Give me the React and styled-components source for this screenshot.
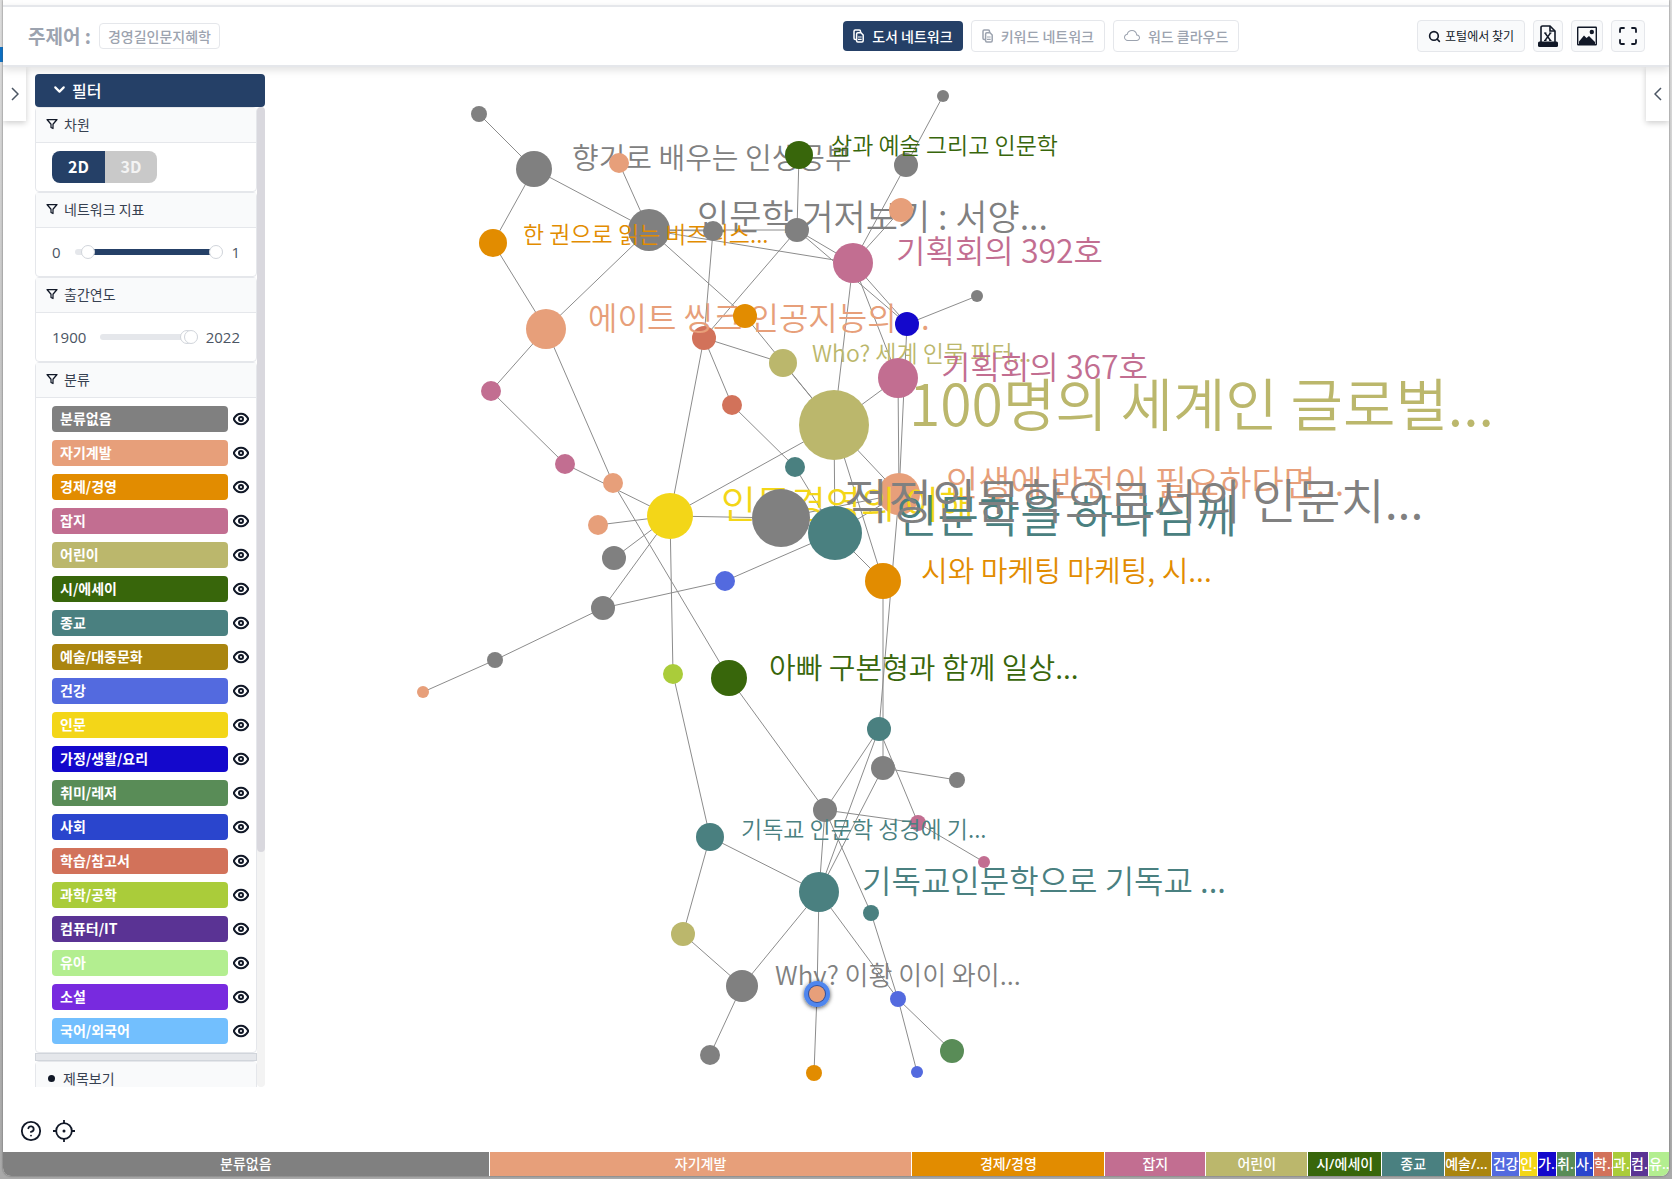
import React, { useState } from "react";
import styled, { createGlobalStyle } from "styled-components";
import { FiFilter, FiChevronDown, FiEye, FiSearch, FiHelpCircle } from "react-icons/fi";
import { BsCloud } from "react-icons/bs";

const navy = "#254067";
const line = "#e5e7eb";
const ink = "#111827";
const muted = "#9ca3af";

const GlobalStyle = createGlobalStyle`
  * { box-sizing: border-box; }
  body {
    margin: 0;
    background:
      linear-gradient(#0b6fc4, #0b6fc4) 0 47px / 3px 15px no-repeat,
      linear-gradient(#dcdcdc, #c6c6c6 30%, #a9a9a9);
    color: ${ink};
    font-family: "Noto Sans CJK KR", "Noto Sans", sans-serif;
    font-size: 14px;
    line-height: 20px;
  }
  button, input { font: inherit; margin: 0; }
`;

const Window = styled.div`
  display: flex;
  flex-direction: column;
  height: calc(100vh - 3px);
  margin: 0 3px 3px;
  overflow: hidden;
  background: #fff;
  border-radius: 0 0 8px 8px;
  box-shadow: 0 0 2px #555;
`;

const Header = styled.header`
  position: relative;
  z-index: 2;
  display: flex;
  align-items: center;
  justify-content: space-between;
  flex: none;
  height: 62px;
  margin-top: 5px;
  padding: 0 24px 0 25px;
  background: #fff;
  border-top: 2px solid ${line};
  border-bottom: 2px solid ${line};
  box-shadow: 0 3px 8px rgba(0, 0, 0, 0.12);
`;

const HeaderSide = styled.div`
  display: flex;
  flex: ${(p) => (p.$end ? "1 1 0" : "2 1 0")};
  align-items: center;
  justify-content: ${(p) => (p.$end ? "flex-end" : "flex-start")};
  gap: 8px;
`;

const Title = styled.h1`
  margin: 0;
  color: ${muted};
  font-size: 19px;
  line-height: 26px;
  font-weight: 700;
`;

const Keyword = styled.span`
  padding: 2px 8px;
  border: 1px solid ${line};
  border-radius: 4px;
  color: ${muted};
  font-weight: 500;
`;

const Tabs = styled.nav`
  display: flex;
  align-items: center;
  gap: 8px;
  padding-left: 4px;
`;

const Tab = styled.button`
  display: flex;
  align-items: center;
  gap: 8px;
  height: ${(p) => (p.$active ? 30 : 32)}px;
  padding: 0 10px;
  border: ${(p) => (p.$active ? "0" : `1px solid ${line}`)};
  border-radius: 4px;
  background: ${(p) => (p.$active ? navy : "#fff")};
  color: ${(p) => (p.$active ? "#fff" : muted)};
  font-weight: 500;
  white-space: nowrap;
`;

const ToolButton = styled.button`
  display: flex;
  align-items: center;
  justify-content: center;
  gap: 4px;
  height: 32px;
  padding: 0 ${(p) => (p.$text ? 10 : 4)}px;
  border: 1px solid ${line};
  border-radius: 4px;
  background: #f9fafb;
  color: ${ink};
  font-size: 12px;
  white-space: nowrap;
`;

const Stage = styled.main`
  position: relative;
  display: flex;
  flex: 1;
  align-items: flex-start;
  justify-content: space-between;
  min-height: 0;
`;

const Network = styled.svg`
  position: absolute;
  inset: 0;
  width: 100%;
  height: 100%;
`;

const NodeLabel = styled.text`
  font-family: "Noto Sans CJK KR", sans-serif;
  font-weight: 350;
`;

const Drawer = styled.button`
  position: relative;
  display: flex;
  align-items: center;
  justify-content: center;
  flex: none;
  width: 23px;
  height: 54px;
  padding: 0;
  border: 0;
  background: #fff;
  color: #4b5563;
  box-shadow: 0 2px 6px rgba(0, 0, 0, 0.2);
`;

const Left = styled.div`
  position: relative;
  display: flex;
  align-items: flex-start;
  gap: 9px;
  height: 100%;
`;

const LeftColumn = styled.div`
  display: flex;
  flex-direction: column;
  width: 230px;
  height: 100%;
  padding-top: 7px;
`;

const FilterToggle = styled.button`
  display: flex;
  align-items: center;
  flex: none;
  gap: 4px;
  height: 33px;
  padding: 0 16px 2px;
  border: 0;
  border-radius: 4px;
  background: ${navy};
  color: #fff;
  font-size: 16px;
  font-weight: 500;
`;

const FilterBody = styled.div`
  display: flex;
  flex: 1;
  min-height: 0;
`;

const Sections = styled.div`
  flex: 1;
  overflow: hidden;
`;

const ScrollTrack = styled.div`
  width: 8px;
  border-radius: 4px;
  background: #f3f3f3;
`;

const ScrollThumb = styled.div`
  height: 76%;
  border-radius: 4px;
  background: #d9d8de;
`;

const Section = styled.section`
  border: 1px solid ${line};
  border-radius: 4px;
`;

const SectionHead = styled.h2`
  display: flex;
  align-items: center;
  gap: 6px;
  height: 35px;
  margin: 0;
  padding: 0 10px 2px;
  border-bottom: 1px solid ${line};
  background: #f9fafb;
  color: #374151;
  font-size: 14px;
  font-weight: 400;
`;

const FunnelIcon = styled(FiFilter)`
  color: ${ink};
`;

const Bullet = styled.span`
  width: 7px;
  height: 7px;
  margin: 0 2px;
  border-radius: 50%;
  background: ${ink};
`;

const SectionBody = styled.div`
  display: flex;
  align-items: center;
  height: 48px;
  padding: 0 16px;
`;

const DimButton = styled.button`
  width: ${(p) => (p.$active ? 53 : 52)}px;
  height: 32px;
  padding: 0 0 2px;
  border: 0;
  border-radius: ${(p) => (p.$active ? "8px 0 0 8px" : "0 8px 8px 0")};
  background: ${(p) => (p.$active ? navy : "#c9c9c9")};
  color: ${(p) => (p.$active ? "#fff" : "#f3f3f3")};
  font-size: 16px;
  font-weight: 700;
`;

const Bound = styled.span`
  color: #4b5563;
  font-family: "Open Sans", sans-serif;
  font-size: 15px;
`;

const RangeBox = styled.div`
  position: relative;
  display: flex;
  align-items: center;
  flex: 1;
  height: 16px;
  margin: 0 8px 0 14px;
`;

const RangeTrack = styled.div`
  width: 100%;
  height: 6px;
  padding: 0 7px;
  border-radius: 3px;
  background: ${line};
`;

const RangeFill = styled.div`
  height: 6px;
  background: ${navy};
`;

const RangeInput = styled.input`
  position: absolute;
  inset: 0;
  width: 100%;
  height: 16px;
  appearance: none;
  background: transparent;
  pointer-events: none;
  &::-webkit-slider-thumb {
    appearance: none;
    width: 14px;
    height: 14px;
    border: 1px solid #d1d5db;
    border-radius: 50%;
    background: #fff;
    pointer-events: auto;
  }
`;

const Categories = styled.ul`
  display: flex;
  flex-direction: column;
  gap: 8px;
  margin: 0;
  padding: 8px 5px 8px 16px;
  list-style: none;
`;

const Category = styled.li`
  display: flex;
  gap: 3px;
`;

const CategoryName = styled.span`
  flex: 1;
  height: 26px;
  padding: 2px 8px;
  border-radius: 4px;
  background: ${(p) => p.$color};
  color: #fff;
  font-weight: 700;
`;

const EyeButton = styled.button`
  display: flex;
  align-items: center;
  justify-content: center;
  width: 20px;
  height: 26px;
  padding: 0;
  border: 0;
  background: none;
  color: ${ink};
`;

const Divider = styled.div`
  height: 8px;
  border: 1px solid #d1d5db;
  background: ${line};
`;

const CornerTools = styled.div`
  display: flex;
  flex: none;
  align-items: center;
  gap: 11px;
  height: 65px;
  padding-top: 22px;
  margin-left: -15px;
`;

const IconButton = styled.button`
  display: flex;
  padding: 0;
  border: 0;
  background: none;
  color: ${ink};
`;

const ShareBar = styled.footer`
  display: flex;
  flex: none;
  gap: 1px;
  height: 24px;
`;

const Share = styled.div`
  flex: ${(p) => p.$weight} 1 0;
  min-width: 0;
  overflow: hidden;
  background: ${(p) => p.$color};
  color: #fff;
  font-family: "Noto Sans", "Noto Sans CJK KR", sans-serif;
  font-weight: 500;
  line-height: 24px;
  text-align: center;
  text-overflow: ellipsis;
  white-space: nowrap;
`;

const C = {
  none: "#808080",
  self: "#e79f7a",
  biz: "#e28c00",
  mag: "#c26e91",
  kid: "#bbb76c",
  essay: "#38660b",
  rel: "#4a8080",
  art: "#aa850f",
  health: "#536adf",
  hum: "#f3d618",
  home: "#1408cc",
  hobby: "#598c57",
  soc: "#2a45cd",
  study: "#d2725a",
  sci: "#aacc3a",
  it: "#5a3394",
  baby: "#b3ee90",
  novel: "#782adf",
  lang: "#72bffe",
};

const categories = [
  ["none", "분류없음", 486],
  ["self", "자기계발", 422],
  ["biz", "경제/경영", 192],
  ["mag", "잡지", 100],
  ["kid", "어린이", 101],
  ["essay", "시/에세이", 73],
  ["rel", "종교", 62],
  ["art", "예술/대중문화", 46],
  ["health", "건강", 27],
  ["hum", "인문", 17],
  ["home", "가정/생활/요리", 18],
  ["hobby", "취미/레저", 18],
  ["soc", "사회", 17],
  ["study", "학습/참고서", 18],
  ["sci", "과학/공학", 17],
  ["it", "컴퓨터/IT", 17],
  ["baby", "유아", 20],
  ["novel", "소설", 0],
  ["lang", "국어/외국어", 0],
];

// id: [x, y, radius, category, label, label x, label baseline, label size]
const nodes = {
  a1: [479, 114, 8, "none"],
  a2: [534, 169, 18, "none", "향기로 배우는 인생공부", 572, 169, 29],
  a4: [649, 230, 21, "none", "인문학 거저보기 : 서양...", 697, 230, 35],
  a3: [619, 163, 10, "self"],
  a5: [493, 243, 14, "biz", "한 권으로 읽는 비즈니스...", 523, 243, 23],
  a6: [713, 231, 10, "none"],
  b6: [797, 230, 12, "none"],
  b1: [943, 96, 6, "none"],
  b3: [906, 165, 12, "none"],
  b2: [799, 155, 14, "essay", "삶과 예술 그리고 인문학", 831, 154, 23],
  b4: [901, 210, 12, "self"],
  b5: [853, 263, 20, "mag", "기획회의 392호", 896, 263, 32],
  a9: [704, 338, 12, "study"],
  a7: [546, 329, 20, "self", "에이트 씽크 인공지능의 ...", 588, 330, 32],
  a8: [745, 316, 12, "biz"],
  b7: [907, 324, 12, "home"],
  b8: [977, 296, 6, "none"],
  c1: [783, 363, 14, "kid", "Who? 세계 인물 피터...", 812, 362, 23],
  b9: [898, 378, 20, "mag", "기획회의 367호", 941, 379, 32],
  c2: [491, 391, 10, "mag"],
  c3: [732, 405, 10, "study"],
  c4: [565, 464, 10, "mag"],
  c5: [795, 467, 10, "rel"],
  c6: [834, 425, 35, "kid", "100명의 세계인 글로벌...", 909, 426, 57],
  d1: [899, 494, 21, "self", "인생에 반전이 필요하다면...", 946, 496, 35],
  d2: [670, 516, 23, "hum", "인문경영의 이해", 721, 518, 38],
  d3: [613, 483, 10, "self"],
  d4: [598, 525, 10, "self"],
  d5: [614, 558, 12, "none"],
  d6: [603, 608, 12, "none"],
  d7: [495, 660, 8, "none"],
  d8: [423, 692, 6, "self"],
  d9: [725, 581, 10, "health"],
  e1: [673, 674, 10, "sci"],
  e2: [729, 678, 18, "essay", "아빠 구본형과 함께 일상...", 769, 679, 29],
  e4: [835, 533, 27, "rel", "인문학을 하나님께", 896, 533, 45],
  e3: [781, 518, 29, "none", "적정인문학으로서의 인문치...", 844, 519, 48],
  e5: [883, 581, 18, "biz", "시와 마케팅 마케팅, 시...", 921, 582, 29],
  f1: [879, 729, 12, "rel"],
  f2: [883, 768, 12, "none"],
  f3: [957, 780, 8, "none"],
  f4: [825, 810, 12, "none"],
  f5: [918, 823, 8, "mag"],
  f6: [984, 862, 6, "mag"],
  f7: [710, 837, 14, "rel", "기독교 인문학 성경에 기...", 741, 838, 23],
  f8: [819, 892, 20, "rel", "기독교인문학으로 기독교 ...", 862, 893, 32],
  f9: [871, 913, 8, "rel"],
  g1: [683, 934, 12, "kid"],
  g2: [742, 986, 16, "none", "Why? 이황 이이 와이...", 775, 985, 26],
  g3: [817, 994, 8, "self"],
  g4: [898, 999, 8, "health"],
  g5: [952, 1051, 12, "hobby"],
  g6: [710, 1055, 10, "none"],
  g7: [814, 1073, 8, "biz"],
  g8: [917, 1072, 6, "health"],
};

const selectedNode = "g3";

const edges = `a1-a2 a2-a5 a2-a4 a3-a4 a4-a7 a5-a7 a7-c2 c2-c4 c4-d2 a7-d3 d3-e2 a4-a6 a4-b6 a4-b5 a4-a8
a6-a9 b6-a9 a9-c1 a9-c3 a9-d2 a8-c6 c1-c6 c3-c5 c5-e4 b2-b6 b6-b5 b6-b7 b1-b3 b3-b5 b4-b5 b5-c6 b5-b7
b5-b9 b7-b8 b7-d1 b9-d1 b9-c6 c6-d2 c6-e4 c6-d1 c6-e5 d2-e3 e3-e4 e3-d1 d2-d4 d2-d5 d2-d6 d6-d7 d7-d8
d6-d9 d9-e4 d2-e1 e1-f7 e2-f4 e4-e5 d1-e4 d1-f1 e5-f2 f1-f4 f1-f8 f1-f5 f2-f3 f2-f8 f4-f8 f4-f5 f5-f6
f4-f9 f9-g4 f8-f7 f7-g1 g1-g2 f8-g2 g2-g6 f8-g3 g3-g7 f8-g4 g4-g5 g4-g8`
  .split(/\s+/)
  .map((pair) => pair.split("-"));

function NetworkChart() {
  return (
    <Network viewBox="3 67 1666 1085" role="img" aria-label="도서 네트워크">
      <defs>
        <filter id="halo" x="-50%" y="-50%" width="200%" height="200%">
          <feDropShadow dx="0" dy="1" stdDeviation="2" floodColor="#000" floodOpacity="0.7" />
        </filter>
      </defs>
      <g stroke="#8c8c8c" strokeWidth="1">
        {edges.map(([from, to]) => (
          <line
            key={from + to}
            x1={nodes[from][0]}
            y1={nodes[from][1]}
            x2={nodes[to][0]}
            y2={nodes[to][1]}
          />
        ))}
      </g>
      {Object.entries(nodes).map(([id, [x, y, r, kind, label, lx, ly, size]]) => (
        <g key={id} fill={C[kind]}>
          {id === selectedNode && <circle cx={x} cy={y} r="13" fill="#4f86ee" filter="url(#halo)" />}
          {id === selectedNode && <circle cx={x} cy={y} r="9" fill="#35509a" />}
          <circle cx={x} cy={y} r={r} />
          {label && (
            <NodeLabel x={lx} y={ly} fontSize={size}>
              {label}
            </NodeLabel>
          )}
        </g>
      ))}
    </Network>
  );
}

const PagesIcon = () => (
  <svg width="11" height="14" viewBox="1 0 11 14" fill="none" stroke="currentColor" strokeWidth="1.5">
    <path d="M4 10.4H3.2A1.2 1.2 0 0 1 2 9.200V2.200A1.200 1.200 0 0 1 3.200 1H7.300A1.200 1.200 0 0 1 8.500 2.200V3.500" />
    <path d="M5.800 3.800H9L11.200 6V11.800A1.200 1.200 0 0 1 10 13H5.800A1.200 1.200 0 0 1 4.600 11.800V5A1.200 1.200 0 0 1 5.800 3.800Z" />
    <path d="M6 8H9.700M6 10.300H9.700" strokeWidth="1.200" />
  </svg>
);

const ExcelIcon = () => (
  <svg width="20" height="22" viewBox="0 0 20 22" fill="none" stroke="currentColor" strokeWidth="1.600">
    <path d="M3 17V2.500A1.500 1.500 0 0 1 4.500 1H12L17 6V17" />
    <path d="M12 1V6H17" />
    <path d="M7 8L12.500 15.500M12.500 8L7 15.500" strokeWidth="1.400" />
    <path d="M6 8H8.500M11.200 8H13.500M6 15.500H8.500M11.200 15.500H13.500" strokeWidth="1" />
    <rect x="0" y="16.500" width="20" height="5.500" rx="1.500" fill="currentColor" stroke="none" />
  </svg>
);

const PictureIcon = () => (
  <svg width="22" height="20" viewBox="-1 0 22 20">
    <rect x="0.700" y="1.200" width="18.600" height="17.600" rx="0.500" fill="none" stroke="currentColor" strokeWidth="1.400" />
    <path d="M2 15.500L7 9.500L9.500 12L12 10L18 16V18H2Z" fill="currentColor" />
    <circle cx="14.800" cy="6" r="2.200" fill="currentColor" />
  </svg>
);

const ExpandIcon = () => (
  <svg width="24" height="20" viewBox="-2 0 24 20" fill="none" stroke="currentColor" strokeWidth="1.800" strokeLinecap="round">
    <path d="M2 6V3.500A1.500 1.500 0 0 1 3.500 2H6M14 2H16.500A1.500 1.500 0 0 1 18 3.500V6M18 14V16.500A1.500 1.500 0 0 1 16.500 18H14M6 18H3.500A1.500 1.500 0 0 1 2 16.500V14" />
  </svg>
);

const LocateIcon = () => (
  <svg width="22" height="22" viewBox="0 0 22 22" fill="none" stroke="currentColor" strokeWidth="1.800">
    <circle cx="11" cy="11" r="7.800" />
    <path d="M11 0V4M11 18V22M0 11H4M18 11H22" />
    <circle cx="11" cy="11" r="1.500" fill="currentColor" stroke="none" />
  </svg>
);

const Arrow = ({ left }) => (
  <svg width="8" height="14" viewBox="0 0 8 14" fill="none" stroke="currentColor" strokeWidth="1.500">
    <path d={left ? "M7 1L1 7L7 13" : "M1 1L7 7L1 13"} />
  </svg>
);

function DoubleRange({ name, min, max, step, from, to, filled = true }) {
  const [low, setLow] = useState(from);
  const [high, setHigh] = useState(to);
  const share = (value) => ((value - min) / (max - min)) * 100;
  const shared = { type: "range", min, max, step };
  return (
    <SectionBody>
      <Bound>{min}</Bound>
      <RangeBox>
        <RangeTrack>
          {filled && (
            <RangeFill style={{ marginLeft: `${share(low)}%`, width: `${share(high) - share(low)}%` }} />
          )}
        </RangeTrack>
        <RangeInput
          {...shared}
          aria-label={`${name} 최소`}
          value={low}
          onChange={(e) => setLow(Math.min(Number(e.target.value), high))}
        />
        <RangeInput
          {...shared}
          aria-label={`${name} 최대`}
          value={high}
          onChange={(e) => setHigh(Math.max(Number(e.target.value), low))}
        />
      </RangeBox>
      <Bound>{max}</Bound>
    </SectionBody>
  );
}

function FilterSection({ title, children }) {
  return (
    <Section>
      <SectionHead>
        <FunnelIcon size={12} strokeWidth={2.5} />
        {title}
      </SectionHead>
      {children}
    </Section>
  );
}

export default function App() {
  return (
    <>
      <GlobalStyle />
      <Window>
        <Header>
          <HeaderSide>
            <Title>주제어 :</Title>
            <Keyword>경영길인문지혜학</Keyword>
          </HeaderSide>
          <Tabs>
            <Tab $active>
              <PagesIcon />
              도서 네트워크
            </Tab>
            <Tab>
              <PagesIcon />
              키워드 네트워크
            </Tab>
            <Tab>
              <BsCloud size={16} />
              워드 클라우드
            </Tab>
          </Tabs>
          <HeaderSide $end>
            <ToolButton $text>
              <FiSearch size={13} strokeWidth={3} />
              포털에서 찾기
            </ToolButton>
            <ToolButton aria-label="엑셀 저장">
              <ExcelIcon />
            </ToolButton>
            <ToolButton aria-label="이미지 저장">
              <PictureIcon />
            </ToolButton>
            <ToolButton aria-label="전체 화면">
              <ExpandIcon />
            </ToolButton>
          </HeaderSide>
        </Header>
        <Stage>
          <NetworkChart />
          <Left>
            <Drawer aria-label="왼쪽 패널 열기">
              <Arrow />
            </Drawer>
            <LeftColumn>
              <FilterToggle>
                <FiChevronDown size={17} strokeWidth={3} />
                필터
              </FilterToggle>
              <FilterBody>
                <Sections>
                  <FilterSection title="차원">
                    <SectionBody>
                      <DimButton $active>2D</DimButton>
                      <DimButton>3D</DimButton>
                    </SectionBody>
                  </FilterSection>
                  <FilterSection title="네트워크 지표">
                    <DoubleRange name="네트워크 지표" min={0} max={1} step={0.01} from={0.05} to={1} />
                  </FilterSection>
                  <FilterSection title="출간연도">
                    <DoubleRange name="출간연도" min={1900} max={2022} step={1} from={2016} to={2022} filled={false} />
                  </FilterSection>
                  <FilterSection title="분류">
                    <Categories>
                      {categories.map(([kind, name]) => (
                        <Category key={kind}>
                          <CategoryName $color={C[kind]}>{name}</CategoryName>
                          <EyeButton aria-label={`${name} 표시`}>
                            <FiEye size={16} strokeWidth={3} />
                          </EyeButton>
                        </Category>
                      ))}
                    </Categories>
                  </FilterSection>
                  <Divider />
                  <Section>
                    <SectionHead>
                      <Bullet />
                      제목보기
                    </SectionHead>
                  </Section>
                </Sections>
                <ScrollTrack>
                  <ScrollThumb />
                </ScrollTrack>
              </FilterBody>
              <CornerTools>
                <IconButton aria-label="도움말">
                  <FiHelpCircle size={22} />
                </IconButton>
                <IconButton aria-label="가운데로 이동">
                  <LocateIcon />
                </IconButton>
              </CornerTools>
            </LeftColumn>
          </Left>
          <Drawer aria-label="오른쪽 패널 열기">
            <Arrow left />
          </Drawer>
        </Stage>
        <ShareBar>
          {categories
            .filter(([, , weight]) => weight > 0)
            .map(([kind, name, weight]) => (
              <Share key={kind} $weight={weight} $color={C[kind]}>
                {name}
              </Share>
            ))}
        </ShareBar>
      </Window>
    </>
  );
}
